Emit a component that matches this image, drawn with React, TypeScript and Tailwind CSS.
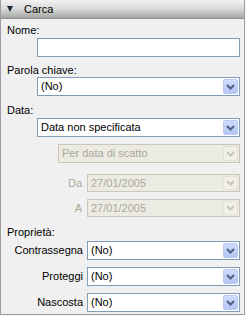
import React from "react";

const font = { fontFamily: '"Liberation Sans", Arial, sans-serif' };

function Chevron({ disabled }: { disabled?: boolean }) {
  return (
    <svg width="9" height="6" viewBox="0 0 9 6">
      <path
        d="M1 1 L4.5 4.5 L8 1"
        fill="none"
        stroke={disabled ? "#c9c7ba" : "#4d6185"}
        strokeWidth="2"
      />
    </svg>
  );
}

function Select({ value, disabled, h = "h-[19px]" }: { value: string; disabled?: boolean; h?: string }) {
  return (
    <div
      className={`flex items-center ${h} border ${
        disabled ? "border-[#c9c7ba] bg-[#ebebe4] text-[#aca899]" : "border-[#7f9db9] bg-white text-black"
      }`}
    >
      <span className="flex-1 pl-[3px] leading-none">{value}</span>
      <div
        className={`mr-px flex h-[calc(100%-2px)] w-[15px] items-center justify-center rounded-[2px] ${
          disabled ? "bg-[#f0efe8] border border-[#e4e2d8]" : "bg-gradient-to-b from-[#cfdcfb] to-[#b3c6f4] border border-[#bccaf3]"
        }`}
      >
        <Chevron disabled={disabled} />
      </div>
    </div>
  );
}

export default function App() {
  return (
    <div className="w-[246px] h-[316px] bg-[#f7f7f7] text-[11px] text-black" style={font}>
      <div className="w-[245px] h-[315px] border-x border-b border-[#9d9d9d] bg-[#f0f0f0]">
        {/* Header */}
        <div className="flex h-[19px] items-center bg-gradient-to-b from-[#f2f2f2] via-[#d7d9d7] to-[#a3a7a3] border-b border-[#8f938f]">
          <svg width="6" height="6" viewBox="0 0 6 6" className="ml-[6px]">
            <path d="M0 0 H6 L3 6 Z" fill="#1e2a3a" />
          </svg>
          <span className="ml-[11px] text-[11px]">Carca</span>
        </div>

        <div className="pl-[6px] pr-[4px]">
          <div className="mt-[4px] h-[14px] leading-[14px]">Nome:</div>
          <div className="ml-[30px] mt-px h-[19px] border border-[#7f9db9] bg-white" />

          <div className="mt-[6px] h-[14px] leading-[14px]">Parola chiave:</div>
          <div className="ml-[30px]">
            <Select value="(No)" />
          </div>

          <div className="mt-[7px] h-[14px] leading-[14px]">Data:</div>
          <div className="ml-[30px] mt-px">
            <Select value="Data non specificata" />
          </div>
          <div className="ml-[51px] mt-[7px]">
            <Select value="Per data di scatto" disabled />
          </div>

          <div className="mt-[11px] flex items-center">
            <span className="w-[80px] pr-[5px] text-right text-[#aca899]">Da</span>
            <div className="flex-1">
              <Select value="27/01/2005" disabled h="h-[18px]" />
            </div>
          </div>
          <div className="mt-[7px] flex items-center">
            <span className="w-[80px] pr-[5px] text-right text-[#aca899]">A</span>
            <div className="flex-1">
              <Select value="27/01/2005" disabled h="h-[18px]" />
            </div>
          </div>

          <div className="mt-[8px] h-[14px] leading-[14px]">Proprietà:</div>
          {["Contrassegna", "Proteggi", "Nascosta"].map((l, i) => (
            <div key={l} className={`flex items-center ${i === 0 ? "mt-[2px]" : "mt-[7px]"}`}>
              <span className="w-[80px] pr-[4px] text-right">{l}</span>
              <div className="flex-1">
                <Select value="(No)" />
              </div>
            </div>
          ))}
        </div>
      </div>
    </div>
  );
}
